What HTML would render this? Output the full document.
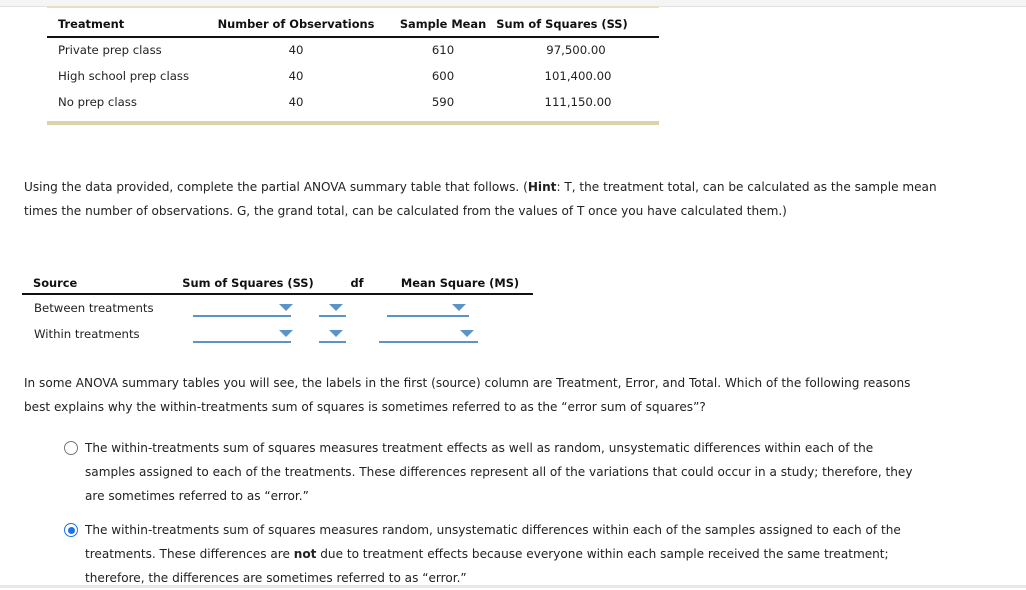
<!DOCTYPE html>
<html><head><meta charset="utf-8">
<style>
*{margin:0;padding:0;box-sizing:border-box}
body{width:1026px;height:588px;overflow:hidden;background:#fff;position:relative;font-family:"DejaVu Sans","Liberation Sans",sans-serif;color:#222;font-size:11.7px}
.a{position:absolute;white-space:nowrap}
.b{font-weight:bold;color:#111;font-size:11.4px}
.c{transform:translateX(-50%)}
.dd{position:absolute;height:2px;background:#5b95c8}
.tri{position:absolute;width:0;height:0;border-left:7px solid transparent;border-right:7px solid transparent;border-top:7px solid #5b95c8}
p.t{position:absolute;font-size:12.08px;line-height:24px;white-space:nowrap;color:#222}
</style></head><body>
<div class="a" style="left:0;top:0;width:1026px;height:6px;background:#f5f5f5"></div>
<div class="a" style="left:0;top:6px;width:1026px;height:1px;background:#e2e2e2"></div>
<div class="a" style="left:47px;top:6px;width:612px;height:2px;background:#e5dfc3"></div>

<div class="a b" style="left:58px;top:17px">Treatment</div>
<div class="a b c" style="left:296px;top:17px">Number of Observations</div>
<div class="a b c" style="left:443px;top:17px">Sample Mean</div>
<div class="a b c" style="left:562px;top:17px">Sum of Squares (SS)</div>
<div class="a" style="left:47px;top:36px;width:612px;height:1.5px;background:#111"></div>
<div class="a" style="left:58px;top:43px">Private prep class</div>
<div class="a c" style="left:296px;top:43px">40</div>
<div class="a c" style="left:443px;top:43px">610</div>
<div class="a c" style="left:576px;top:43px">97,500.00</div>
<div class="a" style="left:58px;top:69px">High school prep class</div>
<div class="a c" style="left:296px;top:69px">40</div>
<div class="a c" style="left:443px;top:69px">600</div>
<div class="a c" style="left:578px;top:69px">101,400.00</div>
<div class="a" style="left:58px;top:95px">No prep class</div>
<div class="a c" style="left:296px;top:95px">40</div>
<div class="a c" style="left:443px;top:95px">590</div>
<div class="a c" style="left:578px;top:95px">111,150.00</div>
<div class="a" style="left:47px;top:121px;width:612px;height:4px;background:#ddd3ab"></div>

<p class="t" style="left:24px;top:175px">Using the data provided, complete the partial ANOVA summary table that follows. (<b>Hint</b>: T, the treatment total, can be calculated as the sample mean<br>times the number of observations. G, the grand total, can be calculated from the values of T once you have calculated them.)</p>

<div class="a b" style="left:33px;top:276px">Source</div>
<div class="a b c" style="left:248px;top:276px">Sum of Squares (SS)</div>
<div class="a b c" style="left:357px;top:276px">df</div>
<div class="a b c" style="left:460px;top:276px">Mean Square (MS)</div>
<div class="a" style="left:22px;top:293px;width:511px;height:1.5px;background:#111"></div>
<div class="a" style="left:34px;top:301px">Between treatments</div>
<div class="a" style="left:34px;top:327px">Within treatments</div>
<div class="dd" style="left:193px;top:315px;width:98px"></div><div class="tri" style="left:279px;top:304px"></div>
<div class="dd" style="left:319px;top:315px;width:27px"></div><div class="tri" style="left:329px;top:304px"></div>
<div class="dd" style="left:387px;top:315px;width:82px"></div><div class="tri" style="left:452px;top:304px"></div>
<div class="dd" style="left:193px;top:341px;width:98px"></div><div class="tri" style="left:279px;top:330px"></div>
<div class="dd" style="left:319px;top:341px;width:27px"></div><div class="tri" style="left:329px;top:330px"></div>
<div class="dd" style="left:379px;top:341px;width:99px"></div><div class="tri" style="left:460px;top:330px"></div>

<p class="t" style="left:24px;top:371px">In some ANOVA summary tables you will see, the labels in the first (source) column are Treatment, Error, and Total. Which of the following reasons<br>best explains why the within-treatments sum of squares is sometimes referred to as the “error sum of squares”?</p>

<div class="a" style="left:64px;top:441px;width:14px;height:14px;border:1px solid #777;border-radius:50%"></div>
<p class="t" style="left:85px;top:436px">The within-treatments sum of squares measures treatment effects as well as random, unsystematic differences within each of the<br>samples assigned to each of the treatments. These differences represent all of the variations that could occur in a study; therefore, they<br>are sometimes referred to as “error.”</p>

<div class="a" style="left:64px;top:523px;width:14px;height:14px;border:1.5px solid #1a73e8;border-radius:50%"></div>
<div class="a" style="left:67.5px;top:526.5px;width:7px;height:7px;background:#1a73e8;border-radius:50%"></div>
<p class="t" style="left:85px;top:518px">The within-treatments sum of squares measures random, unsystematic differences within each of the samples assigned to each of the<br>treatments. These differences are <b>not</b> due to treatment effects because everyone within each sample received the same treatment;<br>therefore, the differences are sometimes referred to as “error.”</p>
<div class="a" style="left:0;top:585px;width:1026px;height:3px;background:#e8e8e8"></div>
</body></html>
